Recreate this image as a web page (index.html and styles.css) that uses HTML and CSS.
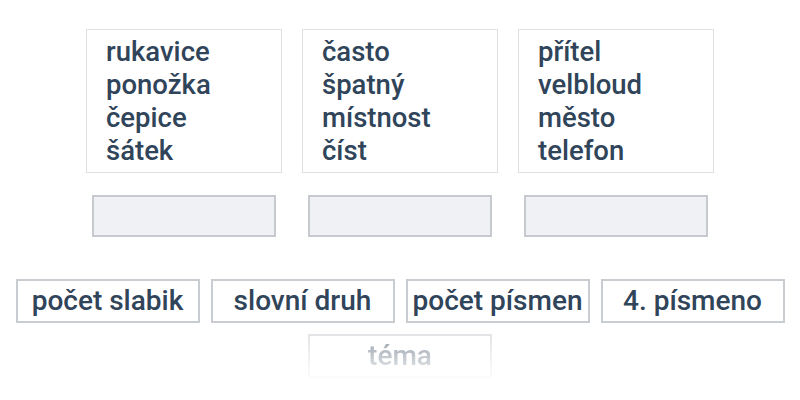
FILE: index.html
```html
<!DOCTYPE html>
<html lang="cs">
<head>
<meta charset="utf-8">
<link rel="stylesheet" href="styles.css">
</head>
<body>
<div class="page">
  <div class="columns">
    <div class="col">
      <div class="words">
        <div>rukavice</div>
        <div>ponožka</div>
        <div>čepice</div>
        <div>šátek</div>
      </div>
      <div class="slot"></div>
    </div>
    <div class="col">
      <div class="words">
        <div>často</div>
        <div>špatný</div>
        <div>místnost</div>
        <div>číst</div>
      </div>
      <div class="slot"></div>
    </div>
    <div class="col">
      <div class="words">
        <div>přítel</div>
        <div>velbloud</div>
        <div>město</div>
        <div>telefon</div>
      </div>
      <div class="slot"></div>
    </div>
  </div>
  <div class="chips">
    <div class="chip">počet slabik</div>
    <div class="chip">slovní druh</div>
    <div class="chip">počet písmen</div>
    <div class="chip">4. písmeno</div>
    <div class="chip faded">téma</div>
  </div>
</div>
</body>
</html>
```

FILE: styles.css
```css
html, body {
  margin: 0;
  padding: 0;
  background: #ffffff;
}
body {
  font-family: Roboto, "Liberation Sans", sans-serif;
  font-weight: 500;
  color: #30445a;
}
.page {
  width: 800px;
  height: 400px;
  overflow: hidden;
  padding-top: 29px;
  box-sizing: border-box;
}
.columns {
  display: flex;
  justify-content: center;
  gap: 20px;
}
.col {
  width: 196px;
  display: flex;
  flex-direction: column;
  align-items: center;
  gap: 22px;
}
.words {
  box-sizing: border-box;
  width: 196px;
  height: 144px;
  border: 1.5px solid #dde0e4;
  padding: 5px 19px;
  font-size: 27.5px;
  line-height: 33px;
}
.slot {
  box-sizing: border-box;
  width: 184px;
  height: 42px;
  background: #f0f1f5;
  border: 2px solid #c6cacf;
}
.chips {
  margin-top: 42px;
  display: flex;
  flex-wrap: wrap;
  justify-content: center;
  gap: 11px 11px;
}
.chip {
  box-sizing: border-box;
  width: 184px;
  height: 44px;
  border: 2px solid #c9cdd2;
  background: #fff;
  display: flex;
  align-items: center;
  justify-content: center;
  font-size: 28px;
  padding-bottom: 1px;
}
.faded {
  -webkit-mask-image: linear-gradient(to bottom, rgba(0,0,0,0.55), rgba(0,0,0,0.05));
  mask-image: linear-gradient(to bottom, rgba(0,0,0,0.55), rgba(0,0,0,0.05));
}
```
